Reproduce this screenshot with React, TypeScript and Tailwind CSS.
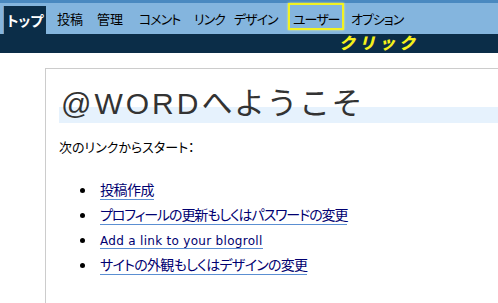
import React from 'react';

const navItems = [
    { label: "投稿", width: "w-[40px]", kana: false },
    { label: "管理", width: "w-[42px]", kana: false },
    { label: "コメント", width: "w-[55px]", kana: true },
    { label: "リンク", width: "w-[40px]", kana: true },
    { label: "デザイン", width: "w-[59px]", kana: true },
    { label: "ユーザー", width: "w-[58px]", kana: true },
    { label: "オプション", width: "w-[60px]", kana: true },
];

const links = [
    { text: "投稿作成", cls: "tracking-[-0.5px]" },
    { text: "プロフィールの更新もしくはパスワードの変更", cls: "tracking-[-1.1px]" },
    { text: "Add a link to your blogroll", cls: "" },
    { text: "サイトの外観もしくはデザインの変更", cls: "tracking-[-0.7px]" },
];

export default function App() {
    const jp = "font-['Noto_Sans_CJK_JP',sans-serif]";

    return (
        <div className={`w-[498px] h-[303px] overflow-hidden bg-white ${jp}`}>
            <div className="h-[3px] bg-[#4a89c0]" />
            <div className="h-[31px] bg-[#84b5de] flex">
                <div className="ml-[3px] mt-[3px] h-[28px] w-[43px] bg-[#0b2d48] border-l border-[#8a9aa8] text-white text-[14px] font-bold flex items-center justify-center [font-feature-settings:'palt']">
                    トップ
                </div>
                <div className="flex h-full ml-[11px] text-[13px] text-black">
                    {navItems.map((item) => (
                        <div key={item.label} className={`relative ${item.width} flex items-center whitespace-nowrap ${item.kana ? "tracking-[-1px] [font-feature-settings:'palt']" : ""}`}>
                            {item.label}
                            {item.label === "ユーザー" && (
                                <div className="absolute left-[-5px] top-0 w-[56px] h-[27px] border-2 border-[#f2f222] shadow-[0_0_2px_#f6f680]" />
                            )}
                        </div>
                    ))}
                </div>
            </div>
            <div className="h-[19px] bg-[#0b2d48] pl-[339px] text-[#f5f01a] text-[16px] font-black leading-[17px] tracking-[4px] italic">
                クリック
            </div>
            <div className="ml-[45px] mt-[15px] border-l border-t border-[#cccccc] pl-[13px] pt-[13px] h-[240px]">
                <h1 className="h-[41px] pl-[2px] leading-[38px] text-[#333] bg-[linear-gradient(to_bottom,transparent_25px,#e6f2fd_25px)] whitespace-nowrap">
                    <span className="text-[30px] tracking-[3px] font-['Liberation_Sans',sans-serif]">@WORD</span>
                    <span className="text-[31px] tracking-[1.5px]">へようこそ</span>
                </h1>
                <p className="mt-[14px] text-[13px] text-black [font-feature-settings:'palt']">次のリンクからスタート：</p>
                <ul className="mt-[19px] ml-[37px] list-disc text-black">
                    {links.map((link) => (
                        <li key={link.text} className="h-[25px] pl-[4px] marker:text-[12px]">
                            {link.text.startsWith("Add") ? (
                                <a className="text-[#000070] text-[12px] tracking-[0.3px] leading-[20px] border-b border-[#5b8fd2] font-['DejaVu_Sans',sans-serif]">
                                    {link.text}
                                </a>
                            ) : (
                                <a className={`text-[#000070] text-[14px] leading-[20px] border-b border-[#5b8fd2] ${link.cls} [font-feature-settings:'palt']`}>
                                    {link.text}
                                </a>
                            )}
                        </li>
                    ))}
                </ul>
            </div>
        </div>
    );
}
